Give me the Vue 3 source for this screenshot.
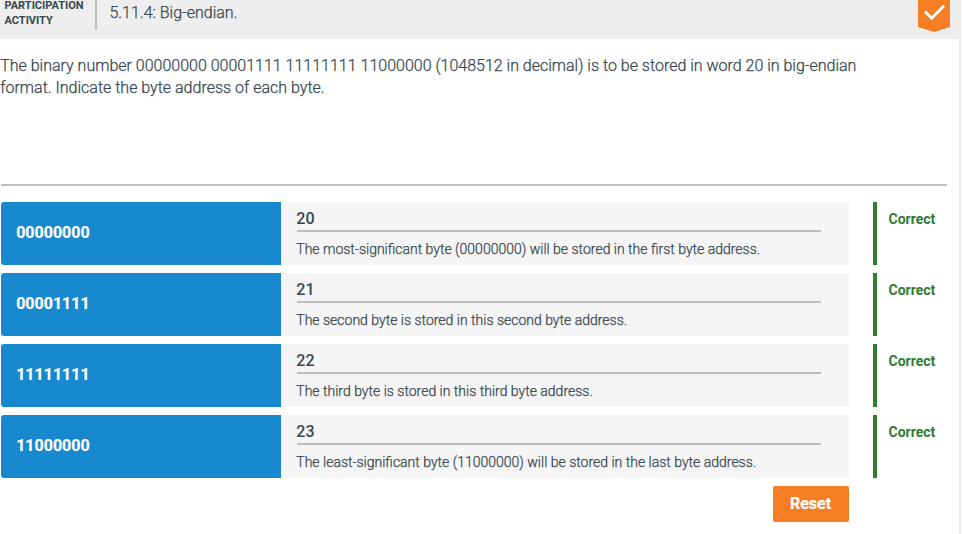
<script setup>
const rows = [
  { bits: '00000000', answer: '20', note: 'The most-significant byte (00000000) will be stored in the first byte address.' },
  { bits: '00001111', answer: '21', note: 'The second byte is stored in this second byte address.' },
  { bits: '11111111', answer: '22', note: 'The third byte is stored in this third byte address.' },
  { bits: '11000000', answer: '23', note: 'The least-significant byte (11000000) will be stored in the last byte address.' },
]
</script>

<template>
  <main class="activity">
    <header class="title-bar">
      <div class="kind"><div class="kind-text">PARTICIPATION<br />ACTIVITY</div></div>
      <h1 class="title">5.11.4: Big-endian.</h1>
      <svg class="chevron" width="32" height="32" viewBox="0 0 32 32">
        <path d="M0 0H32V27L16 32L0 27Z" fill="#f57e23" />
        <path d="M7 11.5L13.7 18.2L26 5.8" fill="none" stroke="#fff" stroke-width="3" />
      </svg>
    </header>
    <div class="instructions">
      <p class="instructions-text">
        The binary number 00000000 00001111 11111111 11000000 (1048512 in decimal) is to be stored in word 20 in big-endian<br />
        format. Indicate the byte address of each byte.
      </p>
    </div>
    <section class="matches">
      <div v-for="row in rows" :key="row.bits" class="row">
        <div class="term">{{ row.bits }}</div>
        <div class="definition">
          <div class="answer">{{ row.answer }}</div>
          <div class="note">{{ row.note }}</div>
        </div>
        <div class="result">Correct</div>
      </div>
      <button class="reset">Reset</button>
    </section>
  </main>
</template>

<style>
body {
  background: #fff;
  overflow: hidden;
}
</style>

<style scoped>
.activity {
  box-sizing: border-box;
  width: 961px;
  height: 534px;
  border-right: 2px solid #eee;
  font-family: Roboto, sans-serif;
  color: #37474f;
}
.title-bar {
  display: flex;
  align-items: flex-start;
  height: 39px;
  background: #eee;
}
.kind {
  box-sizing: border-box;
  width: 97px;
  height: 30px;
  padding-left: 4.5px;
  border-right: 2px solid #bdbdbd;
  font-size: 11px;
  line-height: 15px;
  font-weight: 700;
  white-space: nowrap;
}
.kind-text {
  margin-top: -2px;
}
.title {
  flex: 1;
  margin: 2px 0 0 12.4px;
  font-size: 16px;
  line-height: 22px;
  font-weight: 300;
  -webkit-text-stroke: 0.25px;
}
.chevron {
  margin-right: 9px;
}
.instructions {
  height: 129px;
  margin: 16px 12px 0 1px;
  border-bottom: 2px solid #bdbdbd;
}
.instructions-text {
  margin: 0 0 0 -0.8px;
  font-size: 16px;
  line-height: 22px;
  font-weight: 300;
  white-space: nowrap;
  -webkit-text-stroke: 0.25px;
}
.matches {
  display: flex;
  flex-direction: column;
  gap: 8px;
  margin: 16px 0 0 1px;
}
.row {
  display: flex;
  height: 63px;
}
.term {
  box-sizing: border-box;
  display: flex;
  align-items: center;
  width: 280px;
  padding: 0 0 3px 15.2px;
  border-radius: 3px 0 0 3px;
  background: #1888cf;
  color: #fff;
  font-size: 16px;
  font-weight: 700;
  -webkit-text-stroke: 0.2px;
}
.definition {
  box-sizing: border-box;
  width: 568px;
  padding: 6px 28px 0 16px;
  border-radius: 0 3px 3px 0;
  background: #f5f5f5;
}
.answer {
  height: 22px;
  border-bottom: 2px solid #bdbdbd;
  font-size: 16px;
  line-height: 22px;
  font-weight: 500;
  text-indent: -0.7px;
}
.note {
  margin: 7px 0 0 -0.7px;
  font-size: 14px;
  line-height: 20px;
  font-weight: 300;
  white-space: nowrap;
  -webkit-text-stroke: 0.25px;
}
.result {
  box-sizing: border-box;
  margin-left: 24px;
  padding: 6px 0 0 11.5px;
  border-left: 4px solid #2e7d32;
  color: #2e7d32;
  font-size: 14px;
  line-height: 22px;
  font-weight: 700;
}
.reset {
  width: 76px;
  height: 36px;
  margin-left: 772px;
  padding: 0 1px 0 0;
  border: 0;
  border-radius: 2px;
  background: #f57e23;
  color: #fff;
  font: 700 16px/36px Roboto, sans-serif;
  -webkit-text-stroke: 0.2px;
}
</style>
